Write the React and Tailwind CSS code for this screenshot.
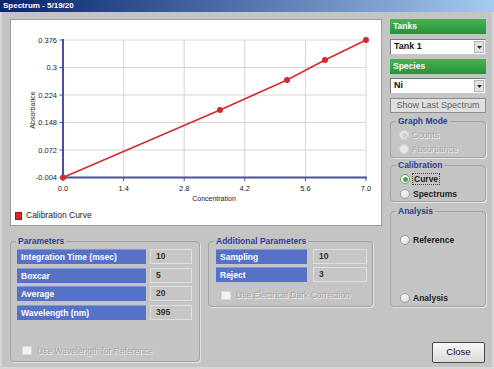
import React from 'react';

const xs = [52, 112.6, 173.2, 233.8, 294.4, 355];
const xLabels = ['0.0', '1.4', '2.8', '4.2', '5.6', '7.0'];
const ys = [20, 47.5, 75, 102.5, 130, 157.5];
const yLabels = ['0.376', '0.3', '0.224', '0.148', '0.072', '-0.004'];
const points = [
  [52, 157.5],
  [209, 90],
  [276, 60],
  [314, 40],
  [355, 20],
];

function Chart() {
  return (
    <div className="h-[207px] bg-white border border-[#9c9c9c] flex flex-col">
      <svg width="370" height="186" className="block">
        {ys.map((y) => (
          <line key={'h' + y} x1="52" x2="355" y1={y} y2={y} stroke="#d3d3dc" strokeWidth="1" />
        ))}
        {xs.map((x) => (
          <line key={'v' + x} x1={x} x2={x} y1="20" y2="157.5" stroke="#d3d3dc" strokeWidth="1" />
        ))}
        {xs.map((x) => (
          <line key={'t' + x} x1={x} x2={x} y1="157.5" y2="161" stroke="#4a4fa0" strokeWidth="1" />
        ))}
        {ys.map((y) => (
          <line key={'l' + y} x1="48.5" x2="52" y1={y} y2={y} stroke="#4a4fa0" strokeWidth="1" />
        ))}
        <line x1="52" x2="52" y1="19" y2="158.5" stroke="#4a4fa0" strokeWidth="2" />
        <line x1="51" x2="356" y1="157.5" y2="157.5" stroke="#4a4fa0" strokeWidth="2" />
        {ys.map((y, i) => (
          <text key={'yl' + y} x="46" y={y + 2.5} textAnchor="end" fontSize="7.5" fill="#222" fontFamily="Liberation Sans, Arial, sans-serif">
            {yLabels[i]}
          </text>
        ))}
        {xs.map((x, i) => (
          <text key={'xl' + x} x={x} y="171" textAnchor="middle" fontSize="7.5" fill="#222" fontFamily="Liberation Sans, Arial, sans-serif">
            {xLabels[i]}
          </text>
        ))}
        <text x="203" y="181" textAnchor="middle" fontSize="7" fill="#222" fontFamily="Liberation Sans, Arial, sans-serif">
          Concentration
        </text>
        <text
          x="0"
          y="0"
          textAnchor="middle"
          fontSize="7"
          fill="#222"
          fontFamily="Liberation Sans, Arial, sans-serif"
          transform="translate(24 90) rotate(-90)"
        >
          Absorbance
        </text>
        <polyline
          points={points.map((p) => p.join(',')).join(' ')}
          fill="none"
          stroke="#d42a2a"
          strokeWidth="1.5"
        />
        {points.map((p) => (
          <circle key={p[0]} cx={p[0]} cy={p[1]} r="3" fill="#d42a2a" />
        ))}
      </svg>
      <div className="flex items-center gap-[4px] pl-[4px] h-[19px]">
        <span className="w-[7px] h-[8px] bg-[#d42a2a] border border-[#a01818]" />
        <span className="text-[8.5px] text-[#222]">Calibration Curve</span>
      </div>
    </div>
  );
}

function Group({ title, className, children }) {
  return (
    <fieldset className={'border border-[#a2a2a2] rounded-[4px] shadow-[1px_1px_0_#e4e4e4] ' + className}>
      <legend className="ml-[5px] px-[2px] text-[8.5px] leading-[10px] font-bold text-[#2f3e96]">{title}</legend>
      {children}
    </fieldset>
  );
}

function ParamRow({ label, value, labelW, valueW, gap }) {
  return (
    <div className={'flex h-[15px] ' + gap}>
      <div
        className={
          'bg-[#5672c6] border-t border-[#7f97d8] text-white font-bold text-[8.5px] leading-[14px] pl-[4px] ' + labelW
        }
      >
        {label}
      </div>
      <div
        className={
          'bg-[#c6c6c6] border border-[#dedede] text-[#333] font-bold text-[8.5px] leading-[13px] pl-[5px] ' + valueW
        }
      >
        {value}
      </div>
    </div>
  );
}

function Checkbox({ label }) {
  return (
    <div className="flex items-center gap-[5px]">
      <span className="w-[10px] h-[9px] bg-[#f2f2f2] border border-[#d8d8d8]" />
      <span className="text-[8.5px] text-[#a6a6a6] [text-shadow:1px_1px_0_#ececec]">{label}</span>
    </div>
  );
}

function Radio({ label, checked, disabled, focus }) {
  return (
    <div className="flex items-center h-[12px] gap-[3px]">
      <span
        className={
          'w-[10px] h-[10px] rounded-full border flex items-center justify-center ' +
          (disabled
            ? 'border-[#d2d2d2] bg-[#e6e6e6]'
            : checked
            ? 'border-[#6a9a6a] bg-white'
            : 'border-[#9a9a9a] bg-gradient-to-br from-white to-[#dcdcdc]')
        }
      >
        {checked && (
          <span className={'w-[5px] h-[5px] rounded-full ' + (disabled ? 'bg-[#cdcdcd]' : 'bg-[#3fae4a]')} />
        )}
      </span>
      <span
        className={
          'text-[8.5px] leading-[10px] ' +
          (disabled
            ? 'text-[#a8a8a8] [text-shadow:1px_1px_0_#ececec]'
            : 'font-bold text-[#222]') +
          (focus ? ' outline outline-1 outline-dotted outline-[#444] px-[1px]' : '')
        }
      >
        {label}
      </span>
    </div>
  );
}

function GreenHeader({ children }) {
  return (
    <div className="h-[15px] bg-gradient-to-b from-[#43b653] to-[#24923a] text-white font-bold text-[8.5px] leading-[15px] pl-[3px]">
      {children}
    </div>
  );
}

function Select({ value }) {
  return (
    <div className="h-[16px] bg-white border border-[#7a7a7a] border-r-[#c8c8c8] border-b-[#c8c8c8] flex items-center">
      <span className="flex-1 pl-[3px] text-[9px] font-bold text-[#111]">{value}</span>
      <span className="w-[10px] h-[12px] mr-[1px] bg-[#e2e2e2] border border-[#b4b4b4] flex items-center justify-center">
        <svg width="5" height="3" viewBox="0 0 5 3">
          <path d="M0 0H5L2.5 3Z" fill="#222" />
        </svg>
      </span>
    </div>
  );
}

export default function App() {
  return (
    <div className="w-[494px] h-[369px] bg-[#c4c4c4] flex flex-col overflow-hidden font-['Liberation_Sans',Arial,sans-serif]">
      <div className="h-[12px] bg-gradient-to-r from-[#0a246a] to-[#a6caf0] text-white font-bold text-[8px] leading-[12px] pl-[3px]">
        Spectrum - 5/19/20
      </div>
      <div className="flex-1 flex pt-[7px] pl-[8px] border-x-2 border-b-2 border-[#d6d6d6]">
        <div className="w-[372px] flex flex-col">
          <Chart />
          <div className="flex mt-[10px] items-start">
            <Group title="Parameters" className="w-[190px] h-[126px]">
              <div className="flex flex-col gap-[3.5px] pt-[3px] pl-[6px]">
                <ParamRow label="Integration Time (msec)" value="10" labelW="w-[129px]" valueW="w-[42px]" gap="gap-[4px]" />
                <ParamRow label="Boxcar" value="5" labelW="w-[129px]" valueW="w-[42px]" gap="gap-[4px]" />
                <ParamRow label="Average" value="20" labelW="w-[129px]" valueW="w-[42px]" gap="gap-[4px]" />
                <ParamRow label="Wavelength (nm)" value="395" labelW="w-[129px]" valueW="w-[42px]" gap="gap-[4px]" />
              </div>
              <div className="mt-[25px] ml-[11px]">
                <Checkbox label="Use Wavelength for Reference" />
              </div>
            </Group>
            <Group title="Additional Parameters" className="ml-[8px] w-[165px] h-[71px]">
              <div className="flex flex-col gap-[3px] pt-[3px] pl-[7px]">
                <ParamRow label="Sampling" value="10" labelW="w-[91px]" valueW="w-[54px]" gap="gap-[6px]" />
                <ParamRow label="Reject" value="3" labelW="w-[91px]" valueW="w-[54px]" gap="gap-[6px]" />
              </div>
              <div className="mt-[7px] ml-[12px]">
                <Checkbox label="Use Electrical Dark Correction" />
              </div>
            </Group>
          </div>
        </div>
        <div className="w-[96px] ml-[8px] flex flex-col">
          <GreenHeader>Tanks</GreenHeader>
          <div className="mt-[5px]">
            <Select value="Tank 1" />
          </div>
          <div className="mt-[4px]">
            <GreenHeader>Species</GreenHeader>
          </div>
          <div className="mt-[4px]">
            <Select value="Ni" />
          </div>
          <button className="mt-[4px] h-[15px] bg-[#dedede] border border-[#8c8c8c] text-[9px] text-[#5e5e5e] leading-[13px]">
            Show Last Spectrum
          </button>
          <Group title="Graph Mode" className="mt-[3px] h-[42px]">
            <div className="flex flex-col gap-[2px] pt-[3px] pl-[8px]">
              <Radio label="Counts" checked disabled />
              <Radio label="Absorbance" disabled />
            </div>
          </Group>
          <Group title="Calibration" className="mt-[2px] h-[42px]">
            <div className="flex flex-col gap-[3px] pt-[3px] pl-[9px]">
              <Radio label="Curve" checked focus />
              <Radio label="Spectrums" />
            </div>
          </Group>
          <Group title="Analysis" className="mt-[4px] h-[101px]">
            <div className="flex flex-col pt-[18px] pl-[9px]">
              <Radio label="Reference" />
              <div className="mt-[46px]">
                <Radio label="Analysis" />
              </div>
            </div>
          </Group>
          <button className="mt-[35px] ml-auto mr-[1px] w-[53px] h-[21px] bg-gradient-to-b from-[#f7f7f7] to-[#dadada] border border-[#4a4a4a] rounded-[2px] text-[9.5px] text-[#111]">
            Close
          </button>
        </div>
      </div>
    </div>
  );
}
